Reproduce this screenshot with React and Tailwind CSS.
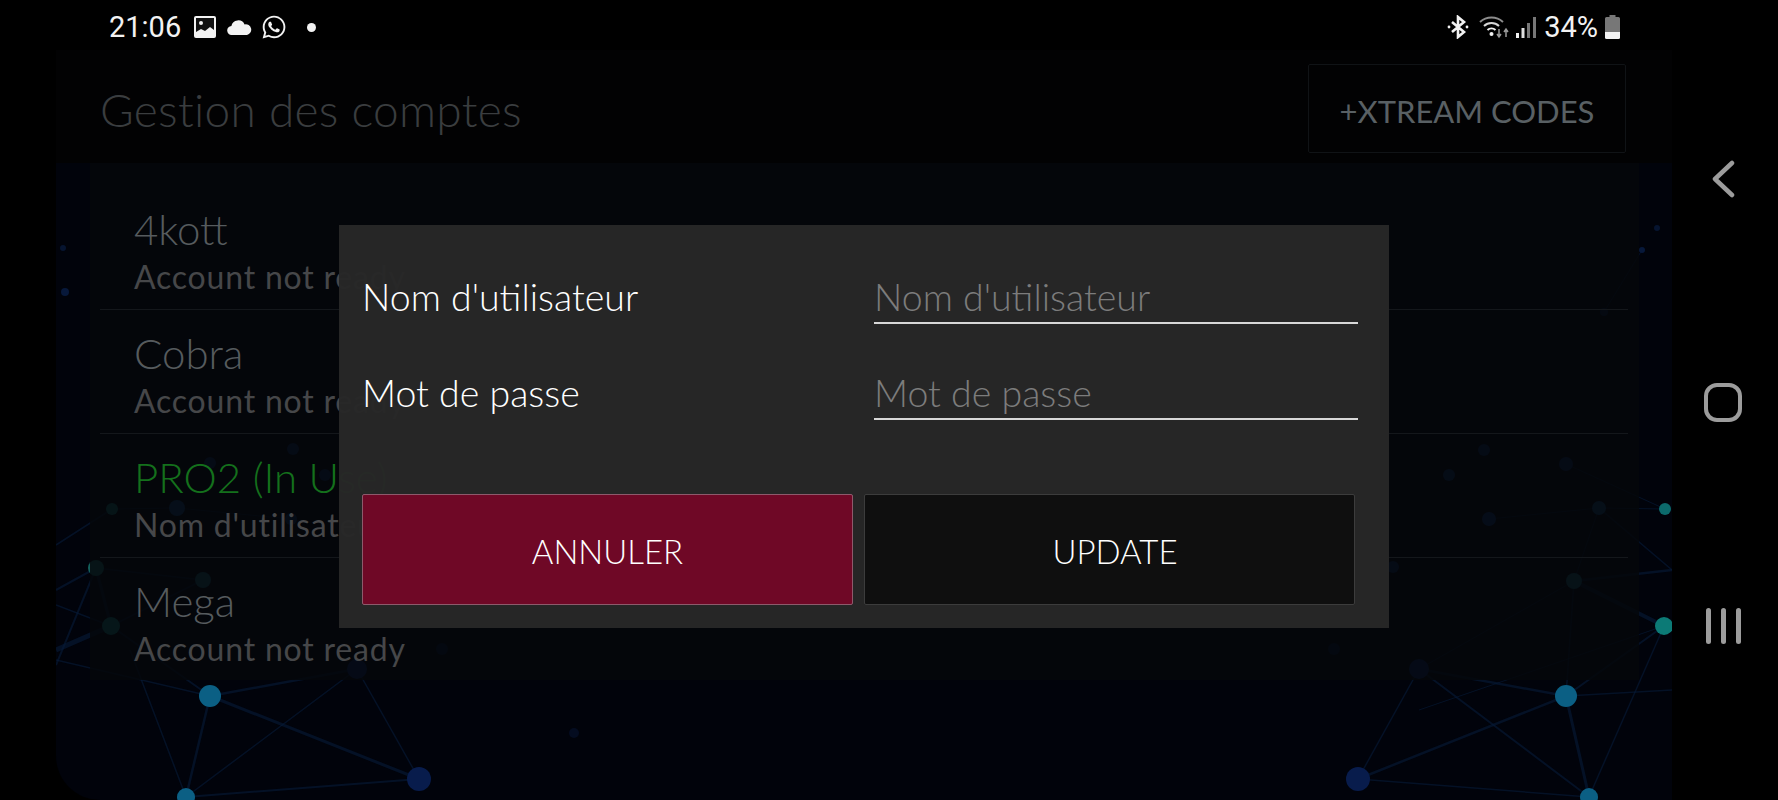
import { FaWhatsapp } from "react-icons/fa";

const LATO = "font-['Lato','Open_Sans',sans-serif]";

// network drawing behind the account list, page coordinates
const NODES = [
  [112, 509, 6, "#13615f"], [177, 508, 8, "#0e3a6b"], [96, 568, 8, "#14605c"], [203, 580, 8, "#144f60"],
  [111, 626, 9, "#0f6e6a"], [210, 696, 11, "#0b5f84"], [357, 669, 10, "#081f58"], [442, 649, 6, "#051230"],
  [186, 797, 9, "#0b5f84"], [419, 779, 12, "#081c4c"], [293, 449, 6, "#0a2150"], [210, 463, 6, "#0a2150"],
  [325, 475, 6, "#0a2150"], [291, 519, 6, "#0a2a5a"], [574, 733, 5, "#040c20"],
  [1484, 450, 6, "#0a2150"], [1566, 464, 7, "#0b2350"], [1449, 475, 6, "#0a2a5a"], [1489, 519, 7, "#0b2c66"],
  [1599, 508, 7, "#0f3c66"], [1665, 509, 6, "#0c6a6c"], [1574, 581, 8, "#144f60"], [1664, 626, 9, "#0c7a76"],
  [1566, 696, 11, "#0b5f84"], [1419, 669, 10, "#081f58"], [1334, 649, 6, "#051230"], [1393, 567, 6, "#0a2150"],
  [1358, 779, 12, "#081c4c"], [1589, 797, 9, "#0b5f84"], [1657, 228, 3, "#061430"], [1642, 250, 3, "#07183a"],
  [1604, 312, 4, "#07183a"], [63, 248, 3, "#061430"], [65, 292, 4, "#07183a"],
];

const EDGES = [
  [112, 509, 56, 545, 1.5], [96, 568, 56, 590, 2], [96, 568, 111, 626, 3], [96, 568, 56, 665, 2],
  [96, 568, 203, 580, 1.5], [111, 626, 56, 650, 5], [111, 626, 56, 605, 1.5], [111, 626, 203, 580, 1.5],
  [111, 626, 210, 696, 2], [56, 660, 210, 696, 1.5], [210, 696, 357, 669, 2.5], [210, 696, 186, 797, 2.5],
  [210, 696, 419, 779, 3], [130, 650, 186, 797, 1.5], [186, 797, 357, 669, 1.5], [186, 797, 419, 779, 2],
  [357, 669, 419, 779, 1.5], [177, 508, 291, 519, 1], [112, 509, 177, 508, 1],
  [1574, 581, 1664, 626, 4], [1574, 581, 1672, 570, 2.5], [1574, 581, 1566, 696, 1.5], [1566, 696, 1664, 626, 2],
  [1566, 696, 1672, 690, 1.5], [1566, 696, 1589, 797, 3], [1566, 696, 1419, 669, 2.5], [1566, 696, 1358, 779, 2.5],
  [1419, 669, 1589, 797, 2], [1419, 669, 1358, 779, 1.5], [1358, 779, 1589, 797, 1.5], [1664, 626, 1589, 797, 1.5],
  [1599, 508, 1489, 519, 1], [1599, 508, 1665, 509, 1], [1599, 508, 1672, 570, 1.5], [1566, 464, 1665, 509, 1],
  [1574, 581, 1419, 669, 1], [1664, 626, 1419, 710, 1], [1599, 508, 1574, 581, 1], [1642, 250, 1604, 312, 1],
];

const ACCOUNTS = [
  { name: "4kott", sub: "Account not ready" },
  { name: "Cobra", sub: "Account not ready" },
  { name: "PRO2 (In Use)", sub: "Nom d'utilisateur", active: true },
  { name: "Mega", sub: "Account not ready", last: true },
];

function Network() {
  return (
    <svg className="absolute inset-0 h-full w-full" viewBox="56 50 1616 750">
      {EDGES.map(([x1, y1, x2, y2, w], i) => (
        <line key={i} x1={x1} y1={y1} x2={x2} y2={y2} stroke="#071a38" strokeOpacity="0.6" strokeWidth={w} />
      ))}
      {NODES.map(([cx, cy, r, fill], i) => (
        <circle key={i} cx={cx} cy={cy} r={r} fill={fill} />
      ))}
    </svg>
  );
}

function StatusBar() {
  return (
    <div className="flex h-[50px] items-center justify-between pl-[109px] pr-[52px] pt-[4px] text-[#f2f2f2]">
      <div className="flex items-center">
        <span className="font-['Roboto',sans-serif] text-[29px] leading-none">21:06</span>
        <svg className="ml-[13px]" width="22" height="22" viewBox="0 0 22 22">
          <rect width="22" height="22" rx="2" fill="#f2f2f2" />
          <rect x="2" y="2" width="18" height="18" fill="#111" />
          <circle cx="7" cy="7" r="2" fill="#f2f2f2" />
          <path d="M2 20v-4l5-3 4 2 5-4 4 3v6z" fill="#f2f2f2" />
        </svg>
        <svg className="ml-[11px]" width="25" height="16" viewBox="0 0 25 16">
          <path d="M5 16a4.5 4.5 0 0 1-.6-9A7 7 0 0 1 17.6 5.4 5.4 5.4 0 0 1 20 16z" fill="#f2f2f2" />
        </svg>
        <FaWhatsapp className="ml-[9px]" size={26} />
        <span className="ml-[20px] h-[9px] w-[9px] rounded-full bg-[#f2f2f2]" />
      </div>
      <div className="flex items-center">
        <svg width="22" height="24" viewBox="0 0 22 24" fill="none" stroke="#f2f2f2" strokeWidth="2.6">
          <path d="M5 7l12 10-6 5V2l6 5L5 17" />
          <circle cx="2" cy="12" r="1.4" fill="#f2f2f2" stroke="none" />
          <circle cx="20" cy="12" r="1.4" fill="#f2f2f2" stroke="none" />
        </svg>
        <svg className="ml-[10px]" width="32" height="24" viewBox="0 0 32 24" fill="none">
          <path d="M1 7a17 17 0 0 1 23 0" stroke="#8c8c8c" strokeWidth="2" />
          <path d="M5 11a11 11 0 0 1 15 0" stroke="#d8d8d8" strokeWidth="2" />
          <path d="M8.500 15a6 6 0 0 1 8 0" stroke="#f2f2f2" strokeWidth="2" />
          <circle cx="12.500" cy="19" r="2" fill="#f2f2f2" />
          <path d="M20 14v7m-2-2l2 3 2-3M27 22v-7m-2 2l2-3 2 3" stroke="#9a9a9a" strokeWidth="1.500" />
        </svg>
        <svg className="ml-[5px]" width="20" height="21" viewBox="0 0 20 21">
          <rect x="0" y="16" width="3" height="5" fill="#f2f2f2" />
          <rect x="5.500" y="11" width="3" height="10" fill="#e0e0e0" />
          <rect x="11" y="6" width="3" height="15" fill="#777" />
          <rect x="17" y="0" width="3" height="21" fill="#777" />
        </svg>
        <span className="ml-[8px] font-['Roboto',sans-serif] text-[29px] leading-none">34%</span>
        <svg className="ml-[7px]" width="15" height="24" viewBox="0 0 15 24">
          <path d="M4.500 0h6v2h3a1.500 1.500 0 0 1 1.500 1.500V17H0V3.500A1.500 1.500 0 0 1 1.500 2h3z" fill="#777" />
          <path d="M0 17h15v5.500a1.500 1.500 0 0 1-1.500 1.500h-12A1.500 1.500 0 0 1 0 22.500z" fill="#f2f2f2" />
        </svg>
      </div>
    </div>
  );
}

function NavRail() {
  return (
    <div className="flex w-[106px] shrink-0 flex-col items-center pr-[4px] pt-[160px]">
      <svg width="26" height="38" viewBox="0 0 26 38" fill="none" stroke="#9c9c9c" strokeWidth="4.500" strokeLinecap="round" strokeLinejoin="round">
        <path d="M22 3L5 19l17 16" />
      </svg>
      <div className="mt-[185px] h-[39px] w-[38px] rounded-[13px] border-[4px] border-[#9c9c9c]" />
      <div className="mt-[186px] flex gap-[10px]">
        <span className="h-[36px] w-[5px] rounded-full bg-[#9c9c9c]" />
        <span className="h-[36px] w-[5px] rounded-full bg-[#9c9c9c]" />
        <span className="h-[36px] w-[5px] rounded-full bg-[#9c9c9c]" />
      </div>
    </div>
  );
}

function AccountRow({ account }) {
  return (
    <div className={`h-[124px] pl-[34px] pt-[20px] ${account.last ? "" : "border-b border-[#14171b]"}`}>
      <div className={`text-[42px] leading-[46px] font-light ${account.active ? "text-[#14701c]" : "text-[#565b5e]"}`}>
        {account.name}
      </div>
      <div className="mt-[6px] text-[32px] leading-[38px] tracking-[0.8px] text-[#464749]">{account.sub}</div>
    </div>
  );
}

function Field({ label }) {
  return (
    <div className="flex h-[96px] items-start justify-between">
      <span className="text-[37.5px] leading-[44px] font-light text-white">{label}</span>
      <input
        placeholder={label}
        className="-mr-[3px] h-[49px] w-[484px] border-b-2 border-[#d8d8d8] bg-transparent pb-[2px] text-[37.5px] font-light outline-none placeholder:text-[#7c7c7c]"
      />
    </div>
  );
}

export default function App() {
  return (
    <div className={`flex h-[800px] w-full overflow-hidden bg-black ${LATO}`}>
      <div className="flex flex-1 flex-col">
        <StatusBar />
        <div className="relative ml-[56px] flex-1 overflow-hidden rounded-bl-[44px] bg-[#01030b]">
          <Network />
          <div className="relative flex h-[113px] items-center justify-between bg-[#020203] pl-[44px] pr-[46px] pt-[4px]">
            <h1 className="pt-[2px] text-[46px] leading-none font-light tracking-[0.3px] text-[#3a3d3f]">Gestion des comptes</h1>
            <button className="h-[89px] w-[318px] rounded-[2px] border border-[#101316] pt-[5px] text-[31px] text-[#596064]">
              +XTREAM CODES
            </button>
          </div>
          <div className="relative ml-[34px] mr-[33px] h-[517px] bg-[#05070a]/85 pl-[10px] pr-[11px] pt-[23px]">
            {ACCOUNTS.map((a) => (
              <AccountRow key={a.name} account={a} />
            ))}
          </div>
          {/* dialog */}
          <div className="absolute inset-0 flex items-center justify-center pt-[3px]">
            <div className="h-[403px] w-[1050px] bg-[#272727]/[0.97] pb-[23px] pl-[23px] pr-[34px] pt-[50px]">
              <Field label="Nom d'utilisateur" />
              <Field label="Mot de passe" />
              <div className="mt-[27px] flex gap-[11px]">
                <button className="h-[111px] w-[491px] rounded-[2px] border border-[#8d5a6b] bg-[#6f0826] pt-[4px] text-[33px] font-light text-white">
                  ANNULER
                </button>
                <button className="h-[111px] w-[491px] rounded-[2px] border border-[#3c3c3c] bg-[#0f0f0f] pl-[11px] pt-[4px] text-[33px] font-light text-white">
                  UPDATE
                </button>
              </div>
            </div>
          </div>
        </div>
      </div>
      <NavRail />
    </div>
  );
}
